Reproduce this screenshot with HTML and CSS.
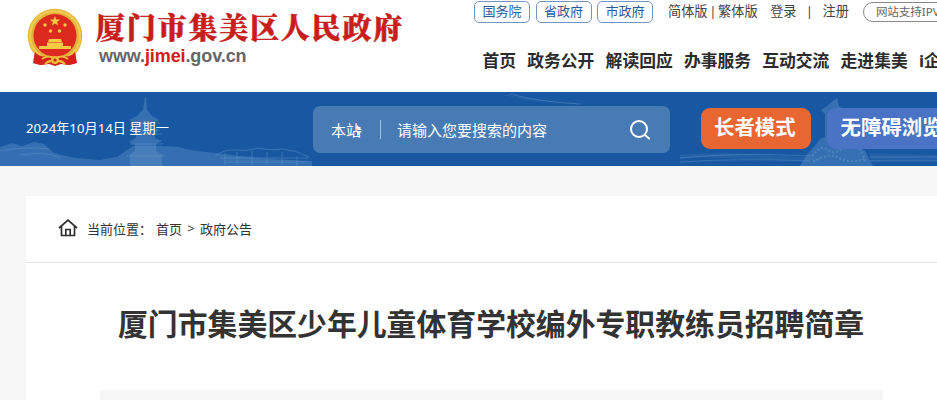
FILE: index.html
```html
<!DOCTYPE html>
<html lang="zh-CN">
<head>
<meta charset="utf-8">
<title>厦门市集美区人民政府</title>
<link rel="stylesheet" href="styles.css">
</head>
<body>
<header class="header">
  <div class="brand">
    <svg class="emblem" width="56" height="60" viewBox="0 0 56 60">
      <path d="M8 43L6 55L13 57L22 56L28 58L34 56L43 57L50 55L48 43Z" fill="#d3221c"/>
      <circle cx="28" cy="28" r="27.3" fill="#e3b23a"/>
      <circle cx="28" cy="28" r="25" fill="none" stroke="#f0c94f" stroke-width="2.500"/>
      <circle cx="28" cy="27.500" r="21.500" fill="#dc2a1e"/>
      <path d="M28 8l1.300 3.600h3.800l-3 2.300 1.100 3.700-3.200-2.200-3.200 2.200 1.100-3.700-3-2.300h3.800z" fill="#f6c945"/>
      <g fill="#f6c945"><circle cx="18" cy="17" r="1.700"/><circle cx="38" cy="17" r="1.700"/><circle cx="23.500" cy="23" r="1.700"/><circle cx="32.500" cy="23" r="1.700"/>
      <path d="M22 31h12l1 3H21zM20 34.500h16v3.500H20zM12 38h32v3H12z"/></g>
      <path d="M8 44C14 51 20 47 28 50C36 47 42 51 48 44L49 55L40 57L34 54L28 57L22 54L15 57L7 55Z" fill="#d3221c"/>
      <path d="M15 51q7-5 13 0q6-5 13 0M18 56q5-5 10-2q5-3 10 2" fill="none" stroke="#f0bc3d" stroke-width="2"/>
      <circle cx="28" cy="52" r="4" fill="#edb93b"/><circle cx="28" cy="52" r="1.600" fill="#d3221c"/>
    </svg>
    <div class="brand-text">
      <div class="brand-name">厦门市集美区人民政府</div>
      <div class="brand-url">www.<span>jimei</span>.gov.cn</div>
    </div>
  </div>
  <div class="header-right">
    <div class="toplinks">
      <a class="gov">国务院</a><a class="gov">省政府</a><a class="gov">市政府</a>
      <span class="lang">简体版</span><span class="bar">|</span><span class="trad">繁体版</span>
      <span class="login">登录</span><span class="sep">|</span><span class="reg">注册</span>
      <span class="ipv">网站支持IPV6</span>
    </div>
    <nav class="nav"><a>首页</a><a>政务公开</a><a>解读回应</a><a>办事服务</a><a>互动交流</a><a>走进集美</a><a>i企业</a></nav>
  </div>
</header>
<section class="band">
  <svg class="scene" width="937" height="74" viewBox="0 0 937 74">
    <g fill="#5f93c9">
      <path opacity=".4" d="M0 55L12 51L22 54L34 50L44 52L54 61L75 66L100 68L117 65L127 58L133 54H160L178 55L196 59L215 61L240 64L270 67L312 69V74H0Z"/>
      <path opacity=".42" d="M145 5h1l1 13 5 6 7 4-5 3v5l6 2-5 3v5l7 3-6 3v7l6 3V74h-32V62l5-3v-6l-6-3 7-4v-5l-6-3 6-3v-4l-7-3 8-4 6-6z"/>
      <path opacity=".42" d="M837 6l2 8 4 3-2 4v24l16 8 8 6 8 15h-73l7-12 7-7 6-8 5-2V22l-4-4 6-4z"/>
      <path opacity=".15" d="M490 0q40 8 96 12l-60-4zM680 62l45-1 95 5v3l-130-4-10 2zM870 61l67 2v6h-67z"/>
    </g>
    <g fill="none" stroke="#77a6d6" opacity=".35">
      <path d="M215 64Q226 57 234 58Q246 60 258 56Q273 59 282 57Q296 58 309 65"/>
      <path d="M0 59q25-5 48-2M20 63q28-4 40 3M132 31h28M131 42h31M130 52h33M126 64h40"/>
      <path d="M220 66h88M224 70h80M225 61v12M237 60v13M252 59v14M267 60v13M282 60v13M297 64v10"/>
      <path d="M680 66q60-6 130-2M680 70q60-4 130-1M870 65h67M870 69h67M510 2q30 8 70 10"/>
      <path d="M812 64q9-12 16-6t18-4t19 15M813 70q15-10 26-4t25 1" stroke-width="2" stroke-dasharray="2 2"/>
    </g>
  </svg>
  <div class="date">2024年10月14日 星期一</div>
  <div class="search">
    <span class="scope">本站<svg class="caret" width="6" height="12" viewBox="0 0 6 12"><path d="M0 0l5 5H0zM0 6h5l-5 5z" fill="#fff"/></svg></span>
    <span class="divider"></span>
    <span class="hint">请输入您要搜索的内容</span>
    <svg class="mag" width="22" height="22" viewBox="0 0 22 22" fill="none" stroke="#fff" stroke-width="2" stroke-linecap="round"><circle cx="10" cy="10" r="8"/><path d="M16 16l4 3.500"/></svg>
  </div>
  <a class="mode elder">长者模式</a>
  <a class="mode access">无障碍浏览</a>
</section>
<main class="card">
  <div class="crumbs">
    <svg class="home" width="20" height="18" viewBox="0 0 20 18" fill="none" stroke="#303030" stroke-width="1.700"><path d="M1 9L10 1.200L19 9M3.500 7.500V16.500H16.500V7.500M7.800 16.500V10.500H12.200V16.500"/></svg>
    <span class="where">当前位置：</span><span class="c1">首页</span><span class="gt">&gt;</span><span>政府公告</span>
  </div>
  <h1 class="title">厦门市集美区少年儿童体育学校编外专职教练员招聘简章</h1>
  <div class="meta"></div>
</main>
</body>
</html>
```
FILE: styles.css
```css
* { box-sizing: border-box; }
body {
  margin: 0;
  height: 400px;
  overflow: hidden;
  background: #f7f7f7;
  color: #333;
  font-family: "Noto Sans", "Noto Sans CJK SC", sans-serif;
  white-space: nowrap;
}
.header { display: flex; height: 92px; background: #fff; overflow: hidden; }
.brand { display: flex; width: 474px; flex: none; padding: 8px 0 0 27px; }
.emblem { flex: none; }
.brand-text { padding-left: 13px; }
.brand-name {
  height: 38px;
  font: 900 29px/38px "Noto Serif CJK SC", "Noto Sans CJK SC", serif;
  letter-spacing: 1.8px;
  color: #c81d1b;
  -webkit-text-stroke: 0.5px #c81d1b;
}
.brand-url {
  margin-left: 3px;
  font: bold 18px/20px "Liberation Sans", sans-serif;
  letter-spacing: -0.1px;
  color: #666;
}
.brand-url span { color: #d0201c; }
.header-right { flex: none; width: 463px; overflow: hidden; }
.toplinks {
  display: flex;
  height: 24px;
  padding-top: 1px;
  font-size: 13.2px;
  line-height: 20px;
  color: #444;
}
.gov {
  flex: none;
  width: 56px;
  height: 22px;
  margin: -0.5px 5.5px 0 0;
  border: 1px solid #7397c4;
  border-radius: 5px;
  text-align: center;
  font-size: 13px;
  line-height: 19px;
  color: #2c5c9e;
}
.toplinks span { flex: none; }
.lang { margin-left: 9.500px; }
.bar { width: 10.500px; text-align: center; }
.login { margin-left: 12.5px; }
.sep { width: 26px; text-align: center; }
.toplinks .ipv {
  width: 110px;
  height: 20px;
  margin: 1px 0 0 14px;
  padding-left: 12px;
  border: 1px solid #888;
  border-radius: 10px;
  font-size: 11.5px;
  line-height: 18px;
  color: #666;
}
.nav {
  display: flex;
  gap: 11.2px;
  padding: 25px 0 0 8.5px;
  font-size: 16.8px;
  font-weight: 700;
  line-height: 24px;
  color: #2b2b2b;
}
.nav a { flex: none; }
.band {
  position: relative;
  display: flex;
  align-items: flex-start;
  height: 74px;
  background: #1858a2;
  color: #fff;
  overflow: hidden;
}
.scene { position: absolute; left: 0; top: 0; }
.date { position: relative; width: 287px; flex: none; margin-left: 26px; padding-top: 26px; font-size: 13.2px; line-height: 20px; }
.search {
  position: relative;
  display: flex;
  align-items: center;
  flex: none;
  width: 357px;
  height: 47px;
  margin-top: 14px;
  padding: 0 19px 0 18px;
  border-radius: 7px;
  background: #487bb4;
  font-size: 15px;
}
.scope { position: relative; width: 49px; }
.caret { position: absolute; left: 26px; top: 6px; }
.divider { width: 1px; height: 19px; background: #9ebbe0; }
.hint { margin-left: 16px; }
.mag { margin-left: auto; }
.mode {
  position: relative;
  flex: none;
  height: 41px;
  margin-top: 16px;
  border-radius: 9px;
  font-size: 20.4px;
  font-weight: 700;
  line-height: 39px;
}
.elder { width: 110px; margin-left: 30.5px; padding-left: 13.5px; background: #e86632; }
.access { width: 130px; margin-left: 16.5px; padding-left: 13.5px; background: #4a73c5; }
.card { height: 204px; margin: 30px 0 0 26px; background: #fff; }
.crumbs {
  display: flex;
  align-items: center;
  height: 67px;
  padding: 0 0 2px 32px;
  border-bottom: 1px solid #e5e5e5;
  font-size: 13px;
}
.home { flex: none; margin-right: 9px; }
.c1 { margin-left: 4px; }
.gt { width: 18px; text-align: center; }
.title {
  height: 45px;
  margin: 38px 0 0 92px;
  font-size: 29.85px;
  font-weight: 700;
  line-height: 45px;
}
.meta { width: 783px; height: 11px; margin: 44px 0 0 74px; background: #f6f6f6; }
```
